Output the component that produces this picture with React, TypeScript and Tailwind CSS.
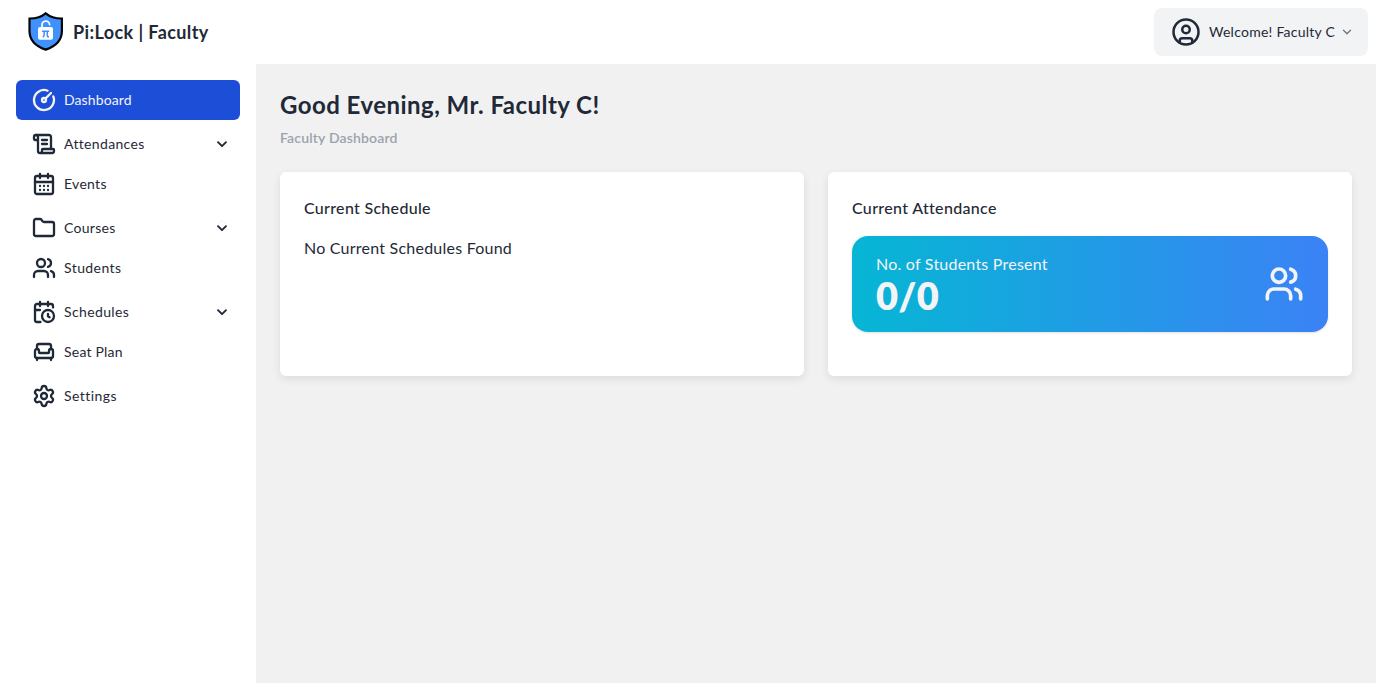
import {
  Armchair,
  CalendarClock,
  CalendarDays,
  ChevronDown,
  CircleGauge,
  CircleUser,
  Folder,
  ScrollText,
  Settings,
  Users,
  type LucideIcon,
} from 'lucide-react';

type Item = { label: string; icon: LucideIcon; track: string; gap: string; menu?: boolean; active?: boolean };

const items: Item[] = [
  { label: 'Dashboard', icon: CircleGauge, track: 'tracking-[0.1px]', gap: 'mt-0', active: true },
  { label: 'Attendances', icon: ScrollText, track: 'tracking-[0.34px]', gap: 'mt-1', menu: true },
  { label: 'Events', icon: CalendarDays, track: 'tracking-[0.3px]', gap: 'mt-0' },
  { label: 'Courses', icon: Folder, track: 'tracking-[0.28px]', gap: 'mt-1', menu: true },
  { label: 'Students', icon: Users, track: 'tracking-[0.42px]', gap: 'mt-0' },
  { label: 'Schedules', icon: CalendarClock, track: 'tracking-[0.38px]', gap: 'mt-1', menu: true },
  { label: 'Seat Plan', icon: Armchair, track: 'tracking-[0.22px]', gap: 'mt-0' },
  { label: 'Settings', icon: Settings, track: 'tracking-[0.46px]', gap: 'mt-1' },
];

function Logo() {
  return (
    <svg className="h-10 w-9 shrink-0" viewBox="0 0 36 40" fill="none">
      <path
        d="M17.700 1.300C13.500 4.800 8 6.600 1.500 6.500v12.400c0 8.800 6 15.200 16.200 18.700 10.200-3.500 16.200-9.900 16.200-18.700V6.500C27.400 6.600 21.900 4.800 17.700 1.300Z"
        fill="#3f92fb"
        stroke="#050505"
        strokeWidth="2.200"
      />
      <path d="M14 15.500V13.200a3.800 3.800 0 0 1 7.600-.6" stroke="#fff" strokeWidth="1.700" strokeLinecap="round" />
      <rect x="10" y="15" width="15" height="12.800" rx="2" fill="#fff" />
      <path d="M14 19.300h7.200M16.200 19.300v3.300q0 2-1.500 2.300M19.300 19.300v4.200q0 1.500 1.700 1.100" stroke="#3f92fb" strokeWidth="1.500" />
    </svg>
  );
}

function MenuChevron() {
  return (
    <svg className="size-4 shrink-0" viewBox="0 0 16 16" fill="none" strokeLinecap="round" strokeLinejoin="round">
      <path d="m4 4.500 4-4 4 4" stroke="#f1f1f1" strokeWidth="1" />
      <path d="m4 6.200 4 4 4-4" stroke="currentColor" strokeWidth="1.900" />
    </svg>
  );
}

export default function App() {
  return (
    <div className="flex h-[683px] flex-col overflow-hidden bg-white font-['Lato',sans-serif] text-[#1f2937]">
      <header className="flex h-16 shrink-0 items-center justify-between pr-2 pl-7">
        <div className="flex items-center gap-[9px]">
          <Logo />
          <span className="text-lg font-bold tracking-[0.4px] whitespace-nowrap">Pi:Lock | Faculty</span>
        </div>
        <button className="flex h-12 w-[214px] items-center rounded-lg bg-[#f1f3f5] pl-[17px]">
          <CircleUser className="size-[30px] shrink-0" strokeWidth={2} />
          <span className="ml-2 w-[127px] text-left text-sm tracking-[0.25px] whitespace-nowrap">
            Welcome! Faculty C
          </span>
          <ChevronDown className="ml-1 size-3.5 shrink-0 text-[#6b7280]" strokeWidth={2.2} />
        </button>
      </header>
      <div className="flex min-h-0 flex-1">
        <aside className="w-64 shrink-0 p-4">
          <nav className="flex flex-col">
            {items.map(({ label, icon: Icon, track, gap, menu, active }) => (
              <a
                key={label}
                className={`flex h-10 items-center rounded-md pr-2.5 pl-4 ${gap} ${active ? 'bg-[#1d4ed8] text-[#f3f4f6]' : ''}`}
              >
                <Icon className="size-6 shrink-0" strokeWidth={2.3} />
                <span className={`ml-2 flex-1 text-sm whitespace-nowrap ${track}`}>{label}</span>
                {menu && <MenuChevron />}
              </a>
            ))}
          </nav>
        </aside>
        <main className="flex-1 bg-[#f1f1f1] p-6">
          <h1 className="text-2xl leading-[34px] font-bold tracking-[0.46px] whitespace-nowrap">
            Good Evening, Mr. Faculty C!
          </h1>
          <p className="mt-1.5 text-sm font-semibold tracking-[0.17px] text-[#9ca3af]">Faculty Dashboard</p>
          <div className="mt-6 grid grid-cols-2 gap-6">
            <section className="h-51 rounded-md bg-white p-6 shadow-[0_3px_8px_rgba(0,0,0,0.09)]">
              <h2 className="font-medium tracking-[0.3px]">Current Schedule</h2>
              <p className="mt-4 tracking-[0.23px]">No Current Schedules Found</p>
            </section>
            <section className="h-51 rounded-md bg-white p-6 shadow-[0_3px_8px_rgba(0,0,0,0.09)]">
              <h2 className="font-medium tracking-[0.33px]">Current Attendance</h2>
              <div className="mt-4 flex h-24 items-center justify-between rounded-2xl bg-linear-to-r/srgb from-[#06b6d4] to-[#3b82f6] px-6 text-[#f3f4f6] shadow">
                <div className="pb-0.5">
                  <p className="tracking-[0.23px]">No. of Students Present</p>
                  <p className="text-[38px] leading-[39px] font-extrabold tracking-[0.3px]">0/0</p>
                </div>
                <Users className="size-10" strokeWidth={2.2} />
              </div>
            </section>
          </div>
        </main>
      </div>
    </div>
  );
}
